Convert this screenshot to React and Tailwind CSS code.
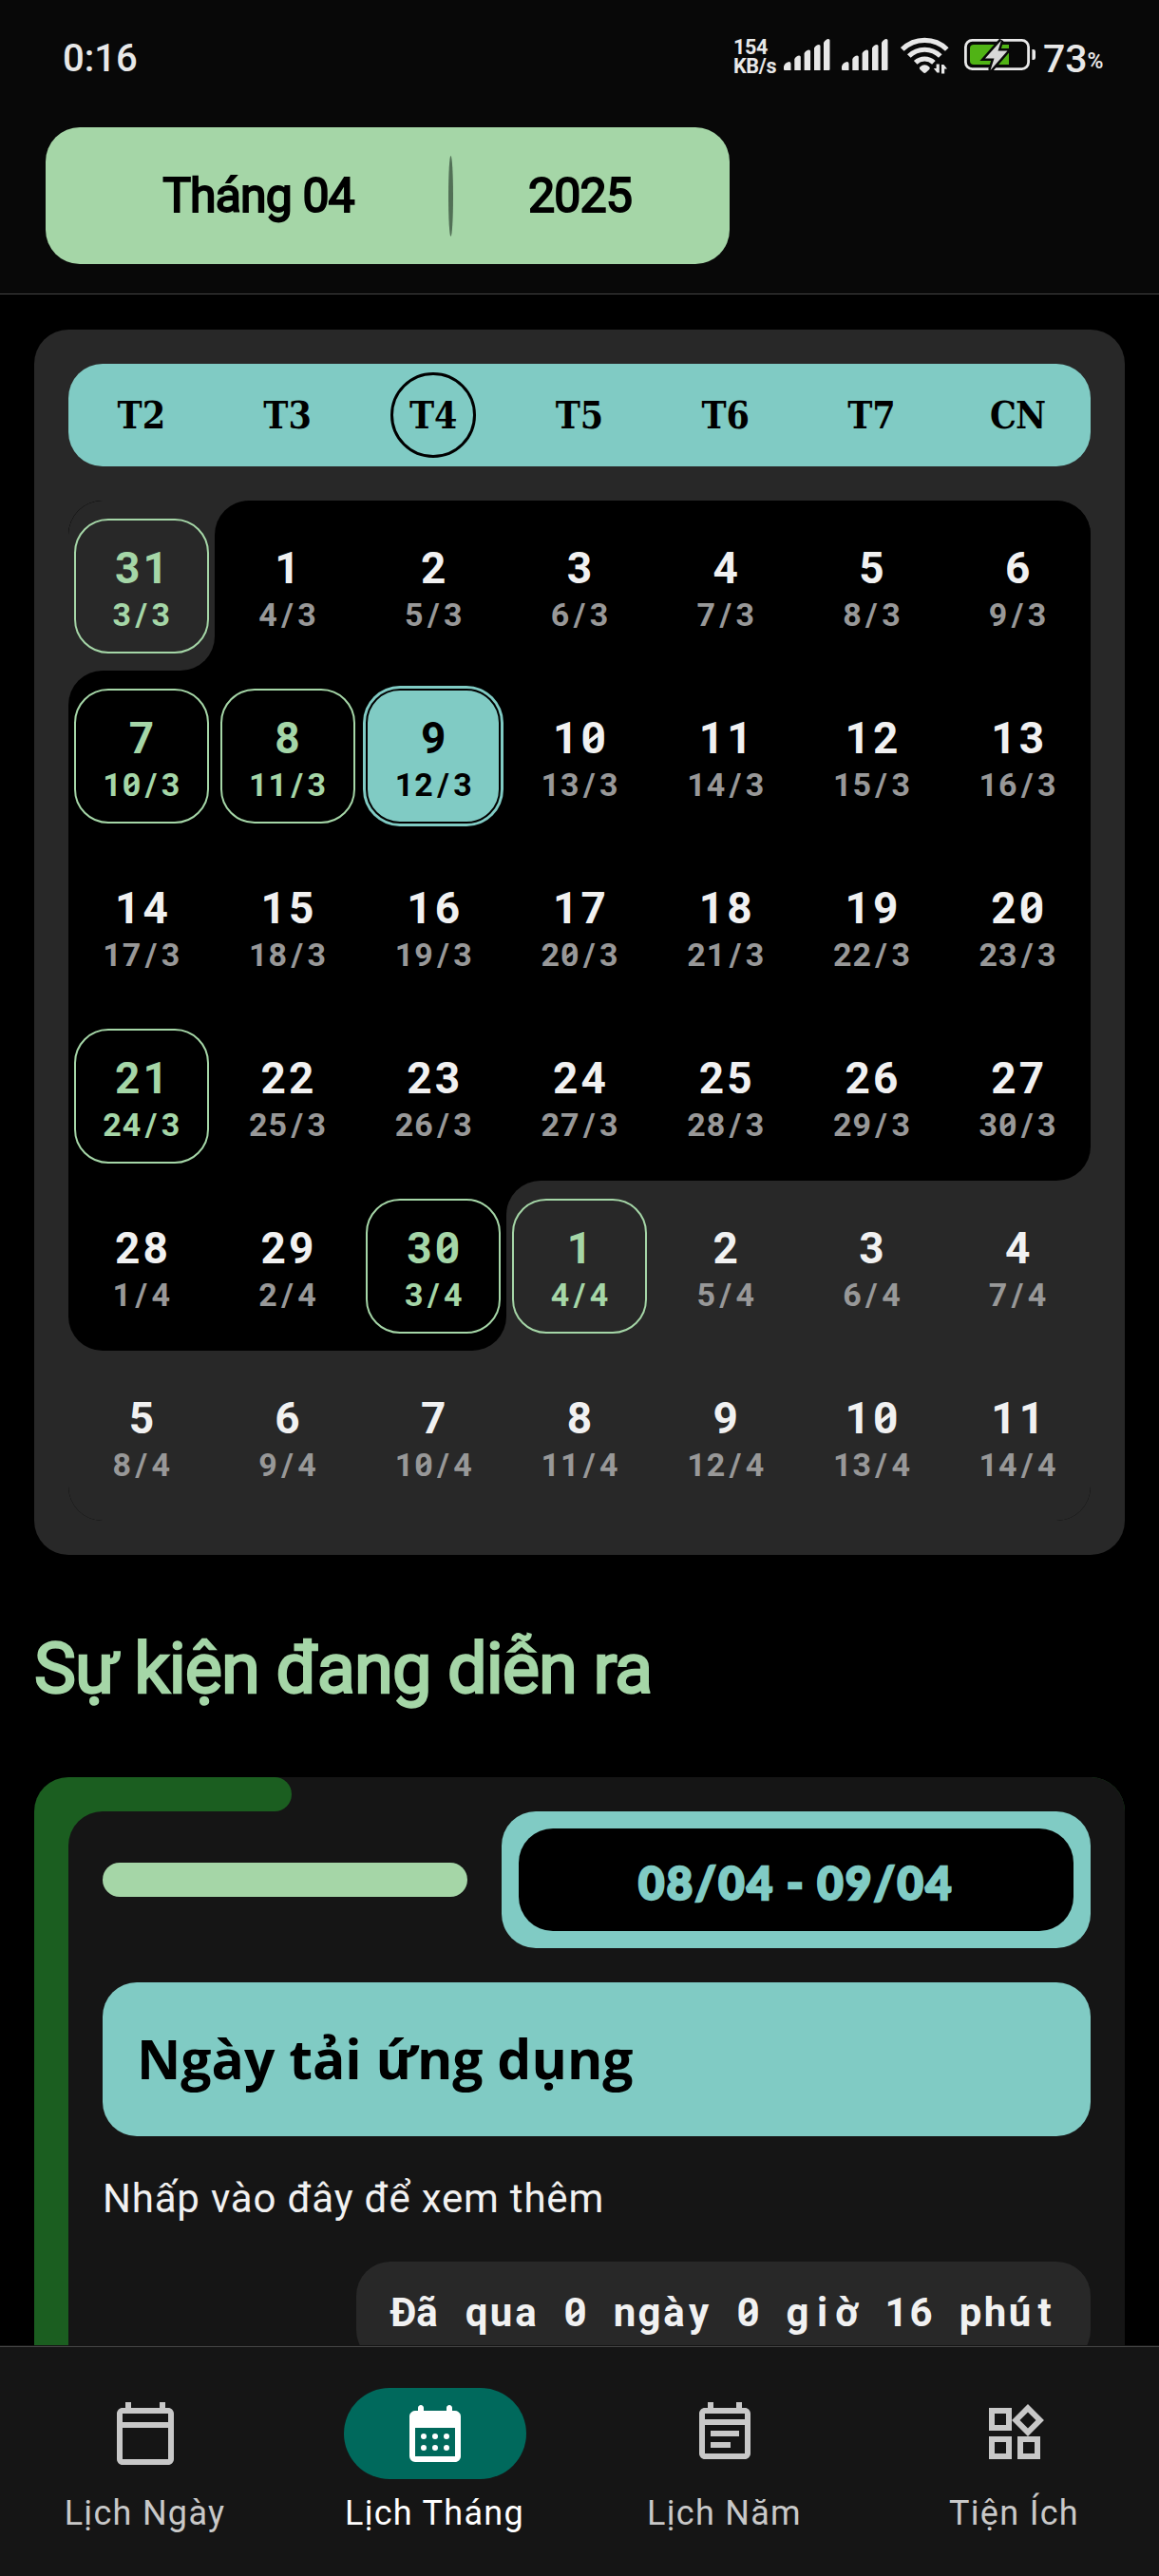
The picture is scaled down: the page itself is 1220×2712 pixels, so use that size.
import React from "react";

const WEEKDAYS = ["T2", "T3", "T4", "T5", "T6", "T7", "CN"];

/* [solar day, lunar date, state] - state: "e" has an event, "t" today */
const DAYS = [
  ["31", "3/3", "e"], ["1", "4/3"], ["2", "5/3"], ["3", "6/3"], ["4", "7/3"], ["5", "8/3"], ["6", "9/3"],
  ["7", "10/3", "e"], ["8", "11/3", "e"], ["9", "12/3", "t"], ["10", "13/3"], ["11", "14/3"], ["12", "15/3"], ["13", "16/3"],
  ["14", "17/3"], ["15", "18/3"], ["16", "19/3"], ["17", "20/3"], ["18", "21/3"], ["19", "22/3"], ["20", "23/3"],
  ["21", "24/3", "e"], ["22", "25/3"], ["23", "26/3"], ["24", "27/3"], ["25", "28/3"], ["26", "29/3"], ["27", "30/3"],
  ["28", "1/4"], ["29", "2/4"], ["30", "3/4", "e"], ["1", "4/4", "e"], ["2", "5/4"], ["3", "6/4"], ["4", "7/4"],
  ["5", "8/4"], ["6", "9/4"], ["7", "10/4"], ["8", "11/4"], ["9", "12/4"], ["10", "13/4"], ["11", "14/4"],
];

const FIRST = 1;
const LAST = 30;

/* Cells whose corners are rounded, with the colour showing behind the corner */
const CORNERS = {
  0: ["bg-black", "rounded-br-[36px]"],
  1: ["bg-[#282828]", "rounded-tl-[36px]"],
  7: ["bg-[#282828]", "rounded-tl-[36px]"],
  27: ["bg-[#282828]", "rounded-br-[36px]"],
  28: ["bg-[#282828]", "rounded-bl-[36px]"],
  30: ["bg-[#282828]", "rounded-br-[36px]"],
  31: ["bg-black", "rounded-tl-[36px]"],
};

const BOX = {
  e: "border-[#a5d6a7] text-[#a5d6a7]",
  t: "border-black bg-[#80cbc4] text-black ring-3 ring-[#80cbc4]",
  n: "border-transparent text-[#f1f1f1]",
};

/* Fixed-pitch text with a slashed zero */
function Mono({ text, pitch }) {
  return (
    <span className="flex justify-center">
      {text.split("").map((c, i) => (
        <span key={i} className={`relative block text-center whitespace-pre ${pitch}`}>
          {c}
          {c === "0" && (
            <span className="absolute top-[52%] left-1/2 h-[0.09em] w-[0.34em] -translate-x-1/2 -translate-y-1/2 -rotate-[38deg] bg-current" />
          )}
        </span>
      ))}
    </span>
  );
}

function Day({ index, data }) {
  const [day, lunar, state] = data;
  const inMonth = index >= FIRST && index <= LAST;
  const [behind, rounding] = CORNERS[index] || ["", ""];
  return (
    <div className={`h-[179px] ${behind}`}>
      <div className={`flex h-full items-center justify-center ${inMonth ? "bg-black" : "bg-[#282828]"} ${rounding}`}>
        <div className={`flex h-[142px] w-[142px] flex-col rounded-[36px] border-2 pt-[27px] font-bold ${BOX[state || "n"]}`}>
          <div className="text-[46px] leading-[46px]">
            <Mono text={day} pitch="w-[29.5px]" />
          </div>
          <div className={`mt-[9px] text-[34px] leading-[34px] ${state ? "" : "text-[#989898]"}`}>
            <Mono text={lunar} pitch="w-[20.5px]" />
          </div>
        </div>
      </div>
    </div>
  );
}

function Signal() {
  return (
    <svg className="h-[36px] w-[50px]" viewBox="0 0 50 36" fill="#e8e8e8">
      <path d="M1 36a1 1 0 0 1-1-1v-3q1-4 5.500-5a2 2 0 0 1 2 2v7zM11.300 36V24q2-3.500 5-3.500a1.500 1.500 0 0 1 1.500 1.500v14zM21.600 36V18q2-3.500 5-3.500a1.500 1.500 0 0 1 1.500 1.500v20zM32 36V12.500q2-3.500 5-3.500a1.500 1.500 0 0 1 1.500 1.500V36zM42 36V7q2-3.700 5-4a1.500 1.500 0 0 1 1.500 1.500V35a1 1 0 0 1-1 1z" />
    </svg>
  );
}

function Wifi() {
  return (
    <svg className="h-[40px] w-[52px]" viewBox="0 0 52 40">
      <g fill="none" stroke="#e8e8e8" strokeWidth="5.200">
        <path d="M1.800 14a33.500 33.500 0 0 1 47 0" />
        <path d="M8.800 21a23.500 23.500 0 0 1 33 0" />
        <path d="M15.700 27.800a14 14 0 0 1 19.200 0" />
      </g>
      <path d="M20.300 32.500q5-4.500 10 0q1 1.300 0 2.600l-3.500 3.200a2.200 2.200 0 0 1-3 0l-3.500-3.200q-1-1.300 0-2.600z" fill="#e8e8e8" />
      <path d="M40.800 29.500v9h-2.400l-3.600-4.500h2.800V29.500zM43 39.500V30h2.400l3.600 4.500h-2.800V39.500z" fill="#e8e8e8" />
    </svg>
  );
}

function Battery() {
  return (
    <svg className="h-[40px] w-[76px]" viewBox="0 0 76 40">
      <rect x="1.400" y="4.400" width="66.200" height="30.200" rx="7" fill="none" stroke="#e8e8e8" strokeWidth="2.800" />
      <path d="M10 9h37v21H10a4 4 0 0 1-4-4V13a4 4 0 0 1 4-4z" fill="#50b315" />
      <path d="M71.400 14h1.300a2.300 2.300 0 0 1 2.300 2.300v6.400a2.300 2.300 0 0 1-2.300 2.300h-1.300z" fill="#e8e8e8" />
      <path d="M39 4.500L22 23.500h9.500L27.500 36l18-20.500H35.500z" fill="#d8d8d8" stroke="#080808" strokeWidth="5" paintOrder="stroke" />
    </svg>
  );
}

function NavIcon({ path }) {
  return (
    <svg className="size-[72px]" viewBox="0 0 24 24" fill="currentColor">
      <path d={path} />
    </svg>
  );
}

const NAV = [
  {
    label: "Lịch Ngày",
    path: "M20 3h-1V1h-2v2H7V1H5v2H4c-1.100 0-2 .9-2 2v16c0 1.100.9 2 2 2h16c1.100 0 2-.9 2-2V5c0-1.100-.9-2-2-2zm0 18H4V10h16v11zm0-13H4V5h16v3z",
  },
  {
    label: "Lịch Tháng",
    active: true,
    path: "M19 4h-1V3c0-.55-.45-1-1-1s-1 .45-1 1v1H8V3c0-.55-.45-1-1-1s-1 .45-1 1v1H5c-1.110 0-2 .9-2 2v14a2 2 0 0 0 2 2h14c1.100 0 2-.9 2-2V6c0-1.100-.9-2-2-2zm0 16H5V10h14v10zM7 13a1 1 0 1 0 2 0a1 1 0 1 0-2 0zM11 13a1 1 0 1 0 2 0a1 1 0 1 0-2 0zM15 13a1 1 0 1 0 2 0a1 1 0 1 0-2 0zM7 17a1 1 0 1 0 2 0a1 1 0 1 0-2 0zM11 17a1 1 0 1 0 2 0a1 1 0 1 0-2 0zM15 17a1 1 0 1 0 2 0a1 1 0 1 0-2 0z",
  },
  {
    label: "Lịch Năm",
    path: "M19 3h-1V1h-2v2H8V1H6v2H5c-1.110 0-2 .9-2 2v14c0 1.100.89 2 2 2h14c1.100 0 2-.9 2-2V5c0-1.100-.9-2-2-2zm0 16H5V9h14v10zm0-12H5V5h14v2zM7 11h10v2H7zM7 15h7v2H7z",
  },
  {
    label: "Tiện Ích",
    path: "M16.660 4.520l2.830 2.830-2.830 2.830-2.830-2.830 2.830-2.830M9 5v4H5V5h4m10 10v4h-4v-4h4M9 15v4H5v-4h4m7.660-13.310L11 7.340 16.660 13l5.660-5.660-5.660-5.650zM11 3H3v8h8V3zm10 10h-8v8h8v-8zm-10 0H3v8h8v-8z",
  },
];

function StatusBar() {
  return (
    <div className="flex h-[134px] items-start pt-[38px] pl-[66px] text-[#e8e8e8]">
      <div className="mt-[4px] text-[40px] leading-[40px] font-medium">0:16</div>
      <div className="ml-auto flex w-[448px] items-start">
        <div className="w-[53px] pt-[2px] text-[21.500px] leading-[20px] font-bold tracking-[-0.300px]">
          <div>154</div>
          <div>KB/s</div>
        </div>
        <Signal />
        <div className="ml-[11px]"><Signal /></div>
        <div className="ml-[12px]"><Wifi /></div>
        <div className="ml-[15px]"><Battery /></div>
        <div className="mt-[4px] ml-[7px] text-[41px] leading-[40px] font-medium">73</div>
        <div className="mt-[15px] text-[23px] leading-[24px] font-medium tracking-[-1px]">%</div>
      </div>
    </div>
  );
}

export default function App() {
  return (
    <div className="flex h-[2712px] w-[1220px] flex-col overflow-hidden bg-black font-['Roboto','Noto_Sans',sans-serif] whitespace-nowrap">
      <header className="h-[310px] border-b border-[#444] bg-[#080808]">
        <StatusBar />
        <div className="ml-12 flex h-36 w-[720px] items-center rounded-[36px] bg-[#a5d6a7] text-[50px] leading-[60px] tracking-[-0.900px] text-black [-webkit-text-stroke:1.900px_black]">
          <div className="w-[424px] pl-6 text-center">Tháng 04</div>
          <div className="h-[85px] w-[5px] rounded-[50%] bg-[#527056]" />
          <div className="flex-1 pr-6 text-center">2025</div>
        </div>
      </header>

      <main className="h-[2159px] overflow-hidden px-9 pt-[37px]">
        <section className="rounded-[36px] bg-[#282828] p-9">
          <div className="grid h-[108px] grid-cols-7 items-center rounded-[36px] bg-[#80cbc4] font-['DejaVu_Serif_Condensed','DejaVu_Serif',serif] text-[39px] font-bold text-black">
            {WEEKDAYS.map((d) => (
              <div key={d} className={`mx-auto flex size-[90px] items-center justify-center rounded-full ${d === "T4" ? "border-3 border-black" : ""} ${d === "CN" ? "tracking-[-1px]" : ""}`}>
                {d}
              </div>
            ))}
          </div>
          <div className="mt-9 grid grid-cols-7 overflow-hidden rounded-[36px] bg-black">
            {DAYS.map((d, i) => (
              <Day key={i} index={i} data={d} />
            ))}
          </div>
        </section>

        <h2 className="mt-[75px] text-[74px] leading-[90px] tracking-[-0.950px] text-[#a5d6a7] [-webkit-text-stroke:2.400px_#a5d6a7]">Sự kiện đang diễn ra</h2>

        <section className="relative mt-[69px] h-[760px] overflow-hidden rounded-[36px] bg-[#1b5e20] pl-9">
          <div className="h-9 w-full bg-[#151515]">
            <div className="h-9 w-[235px] rounded-r-[18px] bg-[#1b5e20]" />
          </div>
          <div className="h-full rounded-tl-[36px] bg-[#151515] pr-9 pl-9">
            <div className="flex h-36 items-center gap-9">
              <div className="h-9 w-[384px] rounded-[18px] bg-[#a5d6a7]" />
              <div className="flex h-36 flex-1 rounded-[36px] bg-[#80cbc4] p-[18px]">
                <div className="flex flex-1 items-center justify-center rounded-[36px] bg-black pt-[6px] font-['Lato',sans-serif] text-[47px] leading-[60px] font-black tracking-[2.500px] text-[#80cbc4] [-webkit-text-stroke:2.500px_#80cbc4] [word-spacing:-1.500px]">
                  08/04 - 09/04
                </div>
              </div>
            </div>
            <div className="mt-9 flex h-[162px] items-center rounded-[36px] bg-[#80cbc4] pb-[3px] pl-9 font-['Open_Sans',sans-serif] text-[57px] leading-[80px] font-bold text-black">
              Ngày tải ứng dụng
            </div>
            <div className="mt-[36px] text-[42px] leading-[60px] tracking-[0.800px] text-[#f1f1f1]">Nhấp vào đây để xem thêm</div>
            <div className="mt-9 ml-auto flex h-[108px] w-[773px] items-center justify-center rounded-[36px] bg-[#282828] text-[42px] leading-[60px] font-bold text-[#f1f1f1]">
              <Mono text="Đã qua 0 ngày 0 giờ 16 phút" pitch="w-[26px]" />
            </div>
          </div>
        </section>
      </main>

      <nav className="h-[243px] bg-[#151515] pt-px">
        <div className="grid h-full grid-cols-4 border-t border-[#444] pt-[43px]">
          {NAV.map((item) => (
            <div key={item.label} className={`flex flex-col items-center ${item.active ? "text-white" : "text-[#c8c8c8]"}`}>
              <div className={`flex h-24 w-48 items-center justify-center rounded-full ${item.active ? "bg-[#00695c]" : ""}`}>
                <NavIcon path={item.path} />
              </div>
              <div className="mt-[15px] text-[36px] leading-[42px] tracking-[1.300px]">{item.label}</div>
            </div>
          ))}
        </div>
      </nav>
    </div>
  );
}
